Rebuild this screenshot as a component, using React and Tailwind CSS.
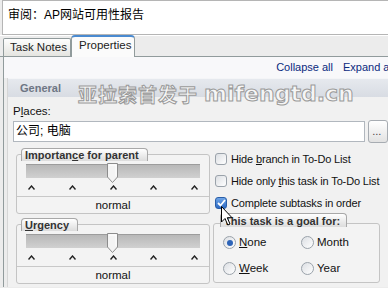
import React from 'react';

const font = "font-['Liberation_Sans','Noto_Sans_CJK_SC',sans-serif]";

function Thumb() {
  return (
    <svg width="11" height="20" viewBox="0 0 11 20" className="absolute top-[-2px]">
      <path d="M0.5 0.5 H10.5 V14 L5.5 19.5 L0.5 14 Z" fill="#f4f4f4" stroke="#8d8d8d" />
      <path d="M2 2 H9 V13" fill="none" stroke="#ffffff" />
    </svg>
  );
}

function Caret() {
  return (
    <svg width="7" height="5" viewBox="0 0 7 5">
      <path d="M0.5 4.5 L3.5 1 L6.5 4.5" fill="none" stroke="#222" strokeWidth="1.4" />
    </svg>
  );
}

function SliderGroup({ label }) {
  return (
    <div className="relative pt-[6px]">
      <div className="absolute left-[5px] top-0 h-[13px] whitespace-nowrap rounded-t-[4px] border border-[#a8a8a8] border-b-0 bg-gradient-to-b from-[#ffffff] to-[#dcdcdc] pl-[3px] pr-[8px] text-[11px] leading-[13px] font-bold text-[#333]">
        {label}
      </div>
      <div className="w-[194px] rounded-[3px] border border-[#c4c4c4] bg-[#f3f3f3] pt-[9px]">
        <div className="relative mx-[9px] h-[14px] bg-gradient-to-b from-[#b8b8b8] to-[#d0d0d0] border-t border-[#9c9c9c]">
          <div className="absolute left-[81px] top-0">
            <Thumb />
          </div>
        </div>
        <div className="mx-[11px] mt-[7px] flex justify-between">
          <Caret />
          <Caret />
          <Caret />
          <Caret />
          <Caret />
        </div>
        <div className="mt-[6px] border-t border-[#c8c8c8] h-[17px] text-center text-[11.5px] leading-[17px] text-[#111]">
          normal
        </div>
      </div>
    </div>
  );
}

function Check({ label, checked }) {
  return (
    <div className="flex items-center h-[22px] gap-[4px] whitespace-nowrap">
      {checked ? (
        <div className="w-[12px] h-[12px] rounded-[3px] border border-[#2a5ea8] bg-gradient-to-b from-[#6ea4e6] to-[#2e6bc4] flex items-center justify-center">
          <svg width="9" height="8" viewBox="0 0 9 8">
            <path d="M1 4 L3.5 6.5 L8 1" fill="none" stroke="#fff" strokeWidth="1.8" />
          </svg>
        </div>
      ) : (
        <div className="w-[12px] h-[12px] rounded-[3px] border border-[#9aa2aa] bg-gradient-to-br from-[#dcdfe3] to-[#ffffff]" />
      )}
      <span className="text-[11px] tracking-[-0.15px] text-[#111]">{label}</span>
    </div>
  );
}

function Radio({ u, rest, checked }) {
  return (
    <div className="flex items-center gap-[3px] h-[25px]">
      <div className="w-[13px] h-[13px] rounded-full border border-[#9aa2aa] bg-gradient-to-br from-[#dcdfe3] to-[#ffffff] flex items-center justify-center">
        {checked && <div className="w-[6px] h-[6px] rounded-full bg-[#2d64b8]" />}
      </div>
      <span className="text-[11.5px] text-[#111]">
        {u && <span className="underline">{u}</span>}
        {rest}
      </span>
    </div>
  );
}

export default function App() {
  return (
    <div className={`relative w-[388px] h-[288px] overflow-hidden bg-[#ececec] ${font}`}>
      {/* Title box */}
      <div className="ml-[2px] h-[35px] border-t border-l border-b border-[#b5b5b5] bg-white pl-[5px] pt-[5px] text-[12px] text-black">
        审阅：AP网站可用性报告
      </div>

      {/* Tabs */}
      <div className="flex items-end h-[22px] pl-[3px] border-b border-[#919b9c] border-t border-t-white">
        <div className="w-[68px] h-[18px] border border-b-0 border-[#919b9c] rounded-t-[2px] bg-gradient-to-b from-[#fefefe] to-[#e4e4e0] text-[11.5px] leading-[17px] pl-[6px] text-[#222]">
          Task Notes
        </div>
        <div className="relative w-[64px] h-[22px] mb-[-1px] border border-b-0 border-[#919b9c] border-t-[2px] border-t-[#4a8ad0] rounded-t-[4px] bg-[#fbfbfb] text-[11.5px] leading-[16px] pl-[7px] text-[#222]">
          Properties
        </div>
      </div>

      {/* Panel */}
      <div className="ml-[3px] border-l border-[#919b9c] h-[230px] flex flex-col">
        <div className="h-[21px] bg-[#f8f8fa] flex justify-end items-center gap-[10px] text-[11px] text-[#0b2a7e] whitespace-nowrap">
          <span>Collapse all</span>
          <span className="w-[45px] overflow-hidden">Expand all</span>
        </div>
        <div className="ml-[3px] flex-1 border-l border-[#d6d6d6] bg-[#f1f1f1] flex flex-col">
          <div className="h-[19px] bg-gradient-to-b from-[#e6e9ee] to-[#d8dce3] border-t border-[#f4f5f7] pl-[12px] text-[11px] font-bold leading-[18px] text-[#6e7684]">
            General
          </div>
          <div className="pl-[5px] pt-[8px]">
            <div className="text-[11.5px] leading-[13px] text-[#111]">
              P<span className="underline">l</span>aces:
            </div>
            <div className="flex items-center mt-[2px] gap-[3px]">
              <div className="w-[355px] h-[21px] border border-[#b1b7be] bg-white pl-[2px] text-[12px] leading-[19px] text-black">
                公司; 电脑
              </div>
              <div className="w-[20px] h-[23px] rounded-[3px] border border-[#a7acb2] bg-gradient-to-b from-[#ffffff] to-[#e2e2e2] text-[11px] leading-[20px] pl-[3px] text-[#444]">
                ...
              </div>
            </div>
            <div className="flex mt-[5px]">
              <div className="w-[194px] ml-[3px] flex flex-col gap-[4px]">
                <SliderGroup label={<>Importan<span className="underline">c</span>e for parent</>} />
                <SliderGroup label={<><span className="underline">U</span>rgency</>} />
              </div>
              <div className="ml-[5px] flex flex-col">
                <Check label={<>Hide <span className="underline">b</span>ranch in To-Do List</>} />
                <Check label={<>Hide only <span className="underline">t</span>his task in To-Do List</>} />
                <Check checked label={<>Complete subtasks in order</>} />
                <div className="relative mt-[9px] ml-[-2px]">
                  <div className="absolute left-[7px] top-[-10px] h-[14px] whitespace-nowrap rounded-t-[4px] border border-b-0 border-[#a8a8a8] bg-gradient-to-b from-[#ffffff] to-[#dcdcdc] pl-[3px] pr-[6px] text-[11px] leading-[14px] font-bold text-[#333]">
                    This task is a <span className="underline">g</span>oal for:
                  </div>
                  <div className="w-[167px] h-[60px] rounded-[3px] border border-[#c4c4c4] bg-[#f3f3f3] pt-[6px] pl-[9px] grid grid-cols-2">
                    <Radio checked u="N" rest="one" />
                    <Radio rest="Month" />
                    <Radio u="W" rest="eek" />
                    <Radio rest="Year" />
                  </div>
                </div>
              </div>
            </div>
          </div>
        </div>
      </div>

      {/* Watermark */}
      <div className="absolute left-[78px] top-[82px] flex items-end gap-[6px] whitespace-nowrap text-[#f6f6f6] font-bold [-webkit-text-stroke:1px_#9a9a9a] pointer-events-none">
        <span className="text-[19px] leading-[24px] tracking-[1px] font-['Noto_Sans_CJK_SC',sans-serif]">亚拉索首发于</span>
        <span className="text-[22px] leading-[24px] font-['DejaVu_Sans',sans-serif]">mifengtd.cn</span>
      </div>

      {/* Cursor */}
      <svg className="absolute left-[221px] top-[206px]" width="14" height="21" viewBox="0 0 14 21">
        <path d="M0.5 0.5 V16 L4 12.5 L6.8 19 L9 18 L6.3 11.7 H11 Z" fill="#fff" stroke="#000" strokeWidth="1" />
      </svg>
    </div>
  );
}
